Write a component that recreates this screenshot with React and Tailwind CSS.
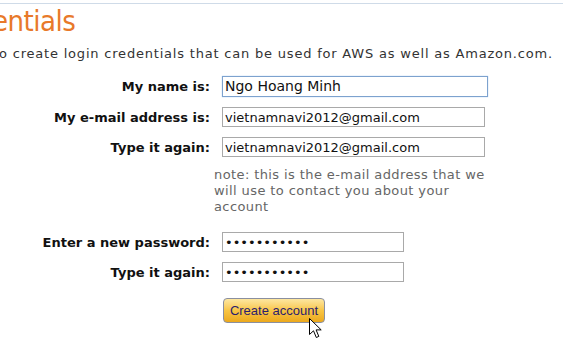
import React from 'react';

const labelCls = "text-right font-bold text-[13px] text-[#111] leading-none pr-3";
const inputCls = "h-[20px] border border-[#a9a9a9] bg-white px-[2px] text-[13px] text-[#111] outline-none";

const Row = ({ label, children, className = '' }) => (
  <div className={`flex items-center ${className}`}>
    <div className={`w-[222px] shrink-0 ${labelCls}`}>{label}</div>
    {children}
  </div>
);

const Cursor = () => (
  <svg className="absolute left-[309px] top-[318px]" width="14" height="22" viewBox="0 0 14 22">
    <path d="M0.5 0.5 L0.5 16.5 L4.5 12.8 L7.3 19.5 L9.8 18.4 L7.1 11.9 L12.2 11.9 Z" fill="#fff" stroke="#000" strokeWidth="1" strokeLinejoin="miter" />
  </svg>
);

export default function App() {
  return (
    <div className="relative w-[563px] h-[356px] overflow-hidden bg-white" style={{ fontFamily: '"DejaVu Sans", Verdana, sans-serif' }}>
      <div className="h-[3px]" />
      <div className="h-px bg-[#cfdbe8]" />
      <h1
        className="text-[29px] leading-[34px] text-[#e8792a] font-normal -ml-[8px] tracking-[-0.5px]"
        style={{ fontFamily: '"DejaVu Sans Condensed", "DejaVu Sans", sans-serif' }}
      >
        entials
      </h1>
      <p className="text-[13px] text-[#333] leading-[20px] mt-[6px] whitespace-nowrap -ml-[1px] tracking-[0.8px]">
        o create login credentials that can be used for AWS as well as Amazon.com.
      </p>

      <div className="mt-[12px] flex flex-col">
        <Row label="My name is:">
          <input
            readOnly
            value="Ngo Hoang Minh"
            className="h-[21px] w-[266px] border border-[#7da2ce] bg-white px-[2px] text-[14px] text-[#111] outline-none shadow-[0_0_1px_#9cc2f0]"
          />
        </Row>
        <Row label="My e-mail address is:" className="mt-[10px]">
          <input readOnly value="vietnamnavi2012@gmail.com" className={`${inputCls} w-[263px]`} />
        </Row>
        <Row label="Type it again:" className="mt-[10px]">
          <input readOnly value="vietnamnavi2012@gmail.com" className={`${inputCls} w-[263px]`} />
        </Row>
        <div className="ml-[214px] mt-[10px] w-[280px] text-[13px] leading-[16px] text-[#666] tracking-[0.4px]">
          note: this is the e-mail address that we will use to contact you about your account
        </div>
        <Row label="Enter a new password:" className="mt-[17px]">
          <input readOnly type="password" value="xxxxxxxxxxx" className={`${inputCls} w-[182px]`} />
        </Row>
        <Row label="Type it again:" className="mt-[10px]">
          <input readOnly type="password" value="xxxxxxxxxxx" className={`${inputCls} w-[182px]`} />
        </Row>
        <div className="ml-[223px] mt-[16px]">
          <button
            className="h-[25px] w-[102px] rounded-[4px] border border-[#8a8f9f] bg-gradient-to-b from-[#fde7a0] via-[#f8c543] to-[#eca91b] text-[13px] text-[#2b1d6e]"
            style={{ fontFamily: '"Liberation Sans", Arial, sans-serif' }}
          >
            Create account
          </button>
        </div>
      </div>
      <Cursor />
    </div>
  );
}
